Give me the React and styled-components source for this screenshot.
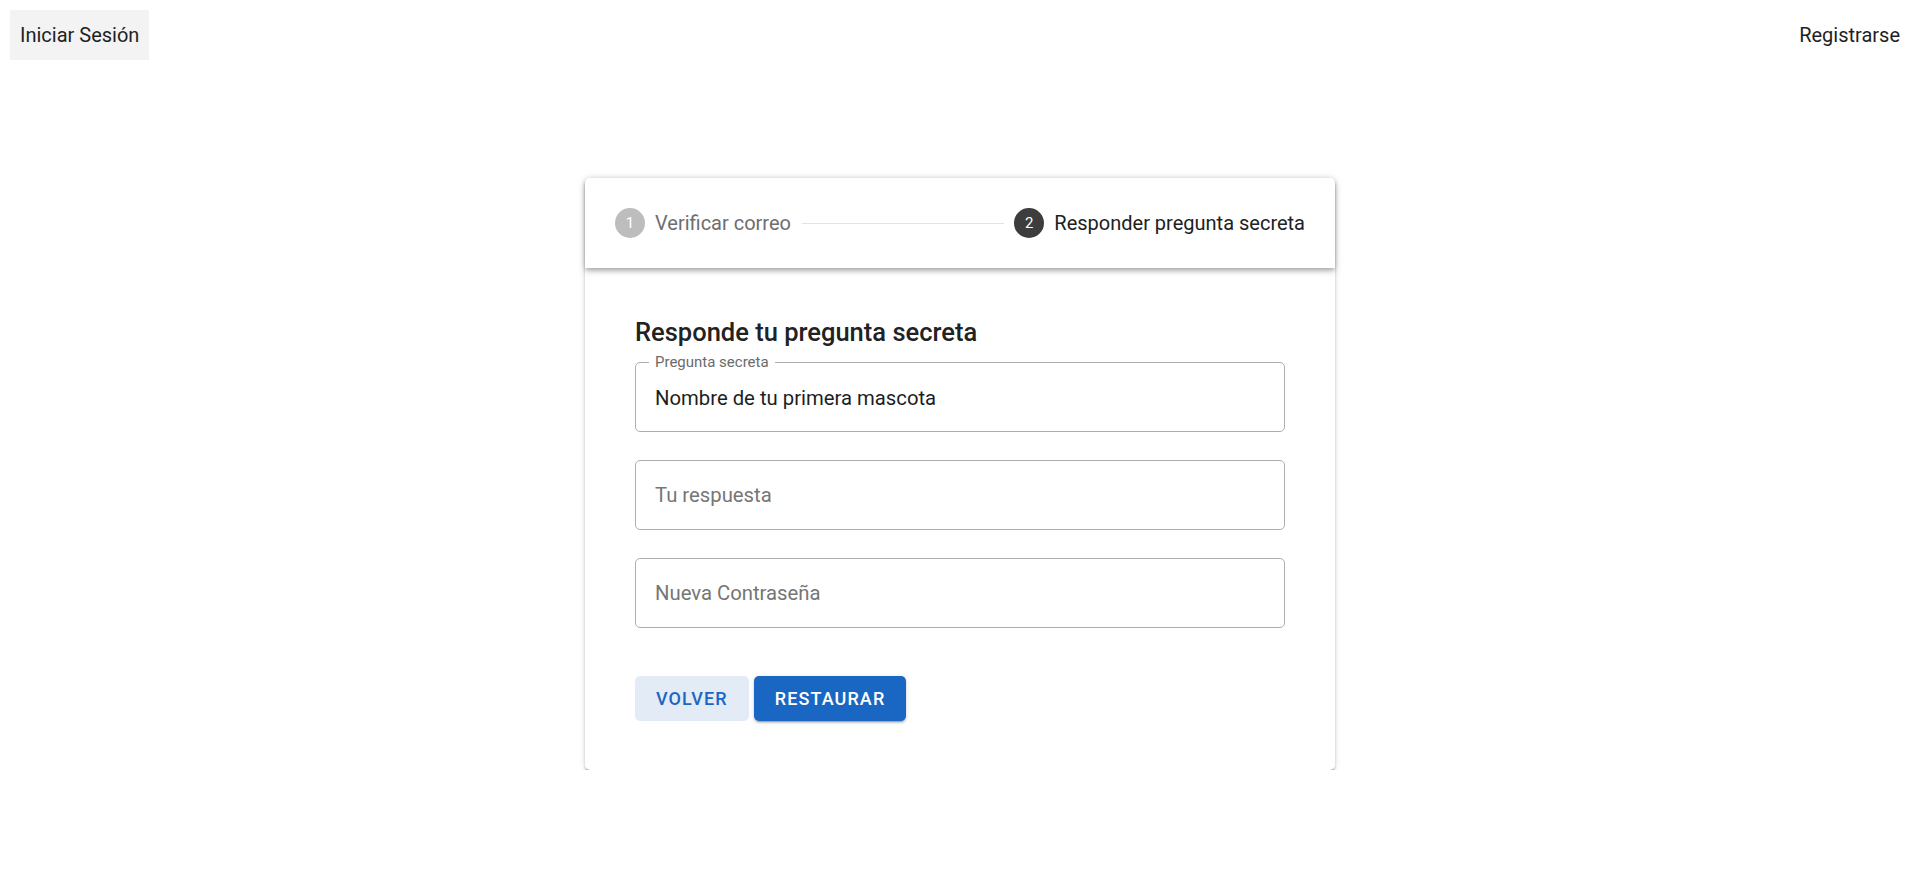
import React from 'react';
import styled, { createGlobalStyle } from 'styled-components';

const GlobalStyle = createGlobalStyle`
  html, body {
    margin: 0;
    padding: 0;
    background: #fff;
    font-family: Roboto, "Liberation Sans", Arial, sans-serif;
    color: #212121;
  }
  * { box-sizing: border-box; }
`;

const TopBar = styled.header`
  display: flex;
  justify-content: space-between;
  align-items: center;
  padding: 10px;
`;

const NavButton = styled.button`
  height: 50px;
  padding: 0 10px;
  border: 0;
  border-radius: 0;
  background: ${p => (p.active ? '#f3f3f3' : 'transparent')};
  font-family: inherit;
  font-size: 20px;
  color: #1f1f1f;
  cursor: pointer;
`;

const Card = styled.section`
  width: 750px;
  margin: 108px auto 0;
  background: #fff;
  border-radius: 5px;
  box-shadow: 0 3px 2px -1px rgba(0,0,0,0.22), 0 2px 3px 0 rgba(0,0,0,0.14), 0 1px 6px 0 rgba(0,0,0,0.12);
`;

const Stepper = styled.div`
  position: relative;
  z-index: 1;
  height: 90px;
  padding: 0 30px;
  display: flex;
  align-items: center;
  border-radius: 5px 5px 0 0;
  background: #fff;
  box-shadow: 0 2px 4px -1px rgba(0,0,0,0.2), 0 4px 5px 0 rgba(0,0,0,0.14), 0 1px 10px 0 rgba(0,0,0,0.12);
`;

const Step = styled.div`
  display: flex;
  align-items: center;
  gap: 10px;
`;

const StepIcon = styled.span`
  width: 30px;
  height: 30px;
  border-radius: 50%;
  display: flex;
  align-items: center;
  justify-content: center;
  font-size: 15px;
  color: #fff;
  background: ${p => (p.active ? '#3d3d3d' : '#bdbdbd')};
`;

const StepLabel = styled.span`
  font-size: 20px;
  color: ${p => (p.active ? '#212121' : '#6e6e6e')};
`;

const Connector = styled.span`
  flex: 1;
  margin: 0 10px 0 11px;
  border-top: 1px solid #e3e3e3;
`;

const Body = styled.div`
  padding: 48px 50px 49px;
`;

const Title = styled.h2`
  margin: 0 0 7px;
  font-size: 25.5px;
  line-height: 32px;
  font-weight: 500;
  color: #222;
`;

const Field = styled.fieldset`
  margin: ${p => (p.first ? '0' : '28px 0 0')};
  padding: 0;
  height: ${p => (p.labelled ? '77px' : '70px')};
  border: 1px solid #adadad;
  border-radius: 5px;
  display: flex;
  flex-direction: column;
`;

const Legend = styled.legend`
  margin-left: 13px;
  padding: 0 6px;
  font-size: 15px;
  line-height: 14px;
  color: #6b6b6b;
`;

const Input = styled.input`
  flex: 1;
  width: 100%;
  margin-top: ${p => (p.labelled ? '-4px' : '0')};
  padding: 0 20px 0 19px;
  border: 0;
  outline: none;
  background: transparent;
  font-family: inherit;
  font-size: 20.3px;
  color: #1e1e1e;
  &::placeholder { color: #767676; }
`;

const Actions = styled.div`
  display: flex;
  gap: 5px;
  margin-top: 48px;
`;

const Button = styled.button`
  height: 45px;
  padding: 0 21px;
  border: 0;
  border-radius: 5px;
  font-family: inherit;
  font-size: 18px;
  font-weight: 500;
  letter-spacing: 1.1px;
  text-transform: uppercase;
  cursor: pointer;
  color: ${p => (p.primary ? '#fff' : '#1a66c2')};
  background: ${p => (p.primary ? '#1a67c3' : '#e2ebf6')};
  box-shadow: ${p => (p.primary
    ? '0 3px 1px -2px rgba(0,0,0,0.2), 0 2px 2px 0 rgba(0,0,0,0.14), 0 1px 5px 0 rgba(0,0,0,0.12)'
    : 'none')};
`;

export default function App() {
  return (
    <>
      <GlobalStyle />
      <TopBar>
        <NavButton active>Iniciar Sesión</NavButton>
        <NavButton>Registrarse</NavButton>
      </TopBar>
      <Card>
        <Stepper>
          <Step>
            <StepIcon>1</StepIcon>
            <StepLabel>Verificar correo</StepLabel>
          </Step>
          <Connector />
          <Step>
            <StepIcon active>2</StepIcon>
            <StepLabel active>Responder pregunta secreta</StepLabel>
          </Step>
        </Stepper>
        <Body>
          <Title>Responde tu pregunta secreta</Title>
          <Field first labelled>
            <Legend>Pregunta secreta</Legend>
            <Input labelled defaultValue="Nombre de tu primera mascota" readOnly />
          </Field>
          <Field>
            <Input placeholder="Tu respuesta" />
          </Field>
          <Field>
            <Input type="password" placeholder="Nueva Contraseña" />
          </Field>
          <Actions>
            <Button>Volver</Button>
            <Button primary>Restaurar</Button>
          </Actions>
        </Body>
      </Card>
    </>
  );
}
